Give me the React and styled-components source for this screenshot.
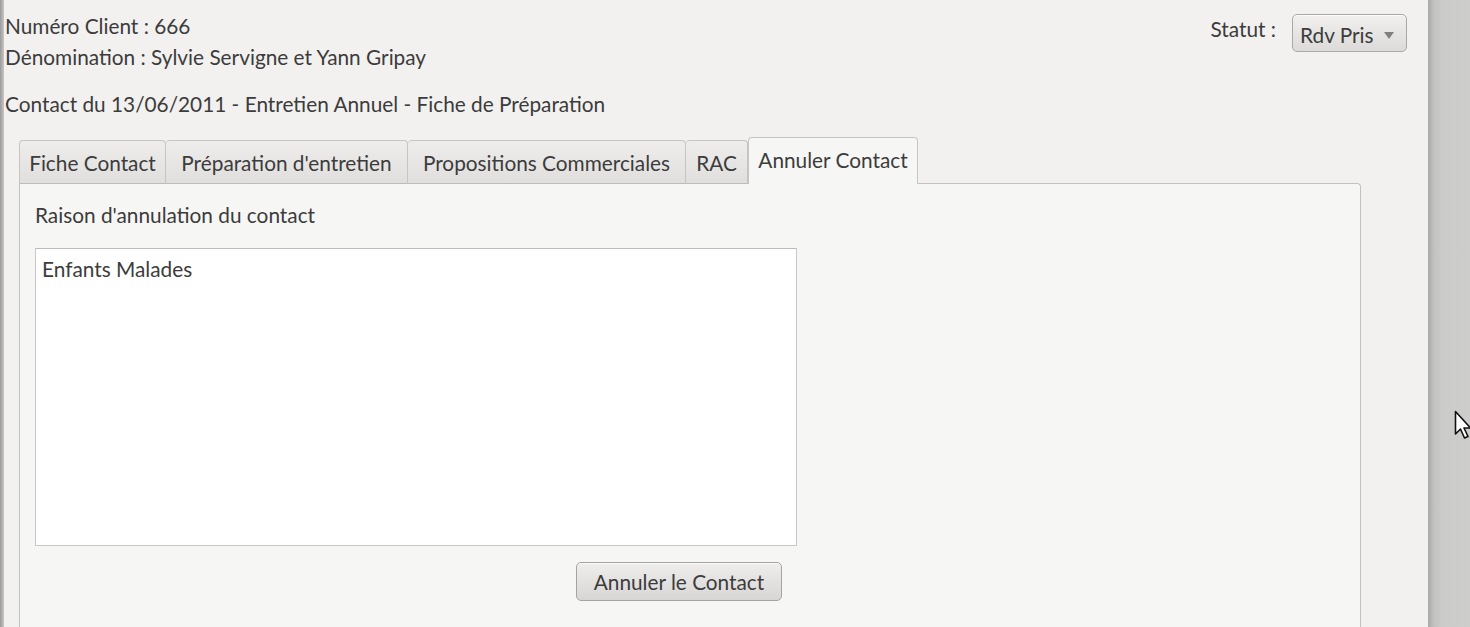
import React, { useState } from "react";
import styled, { createGlobalStyle } from "styled-components";

const GlobalStyle = createGlobalStyle`
  html, body {
    margin: 0;
    padding: 0;
    width: 1470px;
    height: 627px;
    overflow: hidden;
    background: #cbcbca;
  }
  * { box-sizing: border-box; }
`;

const tabs = [
  { label: "Fiche Contact", width: 147 },
  { label: "Préparation d'entretien", width: 242 },
  { label: "Propositions Commerciales", width: 278 },
  { label: "RAC", width: 62 },
  { label: "Annuler Contact", width: 170 },
];

function App() {
  const [active, setActive] = useState(4);
  const [reason, setReason] = useState("Enfants Malades");

  return (
    <Screen>
      <GlobalStyle />
      <LeftEdge />
      <Window>
        <Header>
          <InfoColumn>
            <InfoLine>Numéro Client : 666</InfoLine>
            <InfoLine>Dénomination : Sylvie Servigne et Yann Gripay</InfoLine>
            <ContactLine>
              Contact du 13/06/2011 - Entretien Annuel - Fiche de Préparation
            </ContactLine>
          </InfoColumn>
          <StatusBox>
            <StatusLabel>Statut :</StatusLabel>
            <Combo>
              Rdv Pris
              <ComboArrow />
            </Combo>
          </StatusBox>
        </Header>

        <Notebook>
          <TabBar>
            {tabs.map((t, i) => (
              <Tab
                key={t.label}
                $width={t.width}
                $active={i === active}
                onClick={() => setActive(i)}
              >
                {t.label}
              </Tab>
            ))}
          </TabBar>
          <Panel>
            <FieldLabel>Raison d'annulation du contact</FieldLabel>
            <TextArea
              value={reason}
              onChange={(e) => setReason(e.target.value)}
            />
            <ButtonRow>
              <Button>Annuler le Contact</Button>
            </ButtonRow>
          </Panel>
        </Notebook>
      </Window>
      <Desktop>
        <Cursor width="18" height="30" viewBox="0 0 18 30">
          <path
            d="M1.5 1.5 L1.5 24 L6.5 19 L10.5 28 L14 26.5 L10 18 L16.5 18 Z"
            fill="#fff"
            stroke="#111"
            strokeWidth="1.6"
            strokeLinejoin="round"
          />
        </Cursor>
      </Desktop>
    </Screen>
  );
}

export default App;

const FONT = `Lato, "Open Sans", "DejaVu Sans", sans-serif`;

const Screen = styled.div`
  display: flex;
  width: 1470px;
  height: 627px;
  font-family: ${FONT};
  font-size: 20.8px;
  color: #3c3c3c;
`;

const LeftEdge = styled.div`
  width: 4px;
  flex-shrink: 0;
  background: linear-gradient(to right, #9a9a9a, #c8c7c6);
`;

const Window = styled.div`
  width: 1424px;
  flex-shrink: 0;
  background: #f2f1f0;
  padding: 10px 67px 0 1px;
  display: flex;
  flex-direction: column;
`;

const Header = styled.div`
  display: flex;
  justify-content: space-between;
  align-items: flex-start;
`;

const InfoColumn = styled.div`
  display: flex;
  flex-direction: column;
`;

const InfoLine = styled.div`
  line-height: 31px;
`;

const ContactLine = styled(InfoLine)`
  margin-top: 16px;
`;

const StatusBox = styled.div`
  display: flex;
  align-items: center;
  gap: 16px;
  margin-top: 4px;
  margin-right: -46px;
`;

const StatusLabel = styled.span`
  margin-top: -10px;
`;

const Combo = styled.div`
  width: 115px;
  height: 38px;
  border: 1px solid #a9a8a7;
  border-radius: 5px;
  background: linear-gradient(to bottom, #f1f0ef, #dcdbda);
  box-shadow: inset 0 1px 0 #fbfbfb;
  display: flex;
  align-items: center;
  justify-content: space-between;
  padding: 2px 12px 0 7px;
  color: #3c3c3c;
`;

const ComboArrow = styled.span`
  width: 0;
  height: 0;
  border-left: 5px solid transparent;
  border-right: 5px solid transparent;
  border-top: 7px solid #808080;
  margin-top: 3px;
`;

const Notebook = styled.div`
  margin-top: 18px;
  margin-left: 14px;
  display: flex;
  flex-direction: column;
  flex: 1;
`;

const TabBar = styled.div`
  display: flex;
  align-items: flex-end;
  height: 47px;
  position: relative;
  z-index: 1;
  margin-bottom: -1px;
`;

const Tab = styled.div`
  width: ${(p) => p.$width}px;
  height: ${(p) => (p.$active ? "47px" : "44px")};
  padding-bottom: ${(p) => (p.$active ? "4px" : "0")};
  display: flex;
  align-items: center;
  justify-content: center;
  white-space: nowrap;
  color: #3c3c3c;
  border: 1px solid #c6c5c4;
  border-bottom: ${(p) => (p.$active ? "none" : "1px solid #bdbcbb")};
  border-left: ${(p) => (p.$active ? "1px solid #c6c5c4" : "none")};
  border-radius: 4px 4px 0 0;
  background: ${(p) =>
    p.$active ? "#f6f6f5" : "linear-gradient(to bottom, #eeedec, #e0dfde)"};
  cursor: default;

  &:first-child {
    border-left: 1px solid #c6c5c4;
  }
`;

const Panel = styled.div`
  flex: 1;
  background: #f6f6f5;
  border: 1px solid #c2c1c0;
  border-bottom: none;
  border-radius: 0 4px 0 0;
  padding: 17px 15px 0 15px;
  display: flex;
  flex-direction: column;
`;

const FieldLabel = styled.div`
  line-height: 28px;
`;

const TextArea = styled.textarea`
  width: 762px;
  height: 298px;
  margin-top: 19px;
  border: 1px solid #c8c7c6;
  border-top-color: #bdbcbb;
  background: #fff;
  padding: 7px 6px;
  font-family: ${FONT};
  font-size: 20.8px;
  color: #3c3c3c;
  resize: none;
  outline: none;
`;

const ButtonRow = styled.div`
  width: 1288px;
  display: flex;
  justify-content: center;
  margin-top: 16px;
`;

const Button = styled.button`
  height: 39px;
  padding: 0 17px;
  border: 1px solid #a5a4a3;
  border-radius: 5px;
  background: linear-gradient(to bottom, #efeeed, #d7d6d5);
  box-shadow: inset 0 1px 0 #fafafa;
  font-family: ${FONT};
  font-size: 20.8px;
  color: #3c3c3c;
`;

const Desktop = styled.div`
  flex: 1;
  position: relative;
  background: linear-gradient(to right, #a9a9a8 0px, #c2c2c1 6px, #cbcbca 14px, #cdcdcc);
`;

const Cursor = styled.svg`
  position: absolute;
  left: 26px;
  top: 410px;
`;
